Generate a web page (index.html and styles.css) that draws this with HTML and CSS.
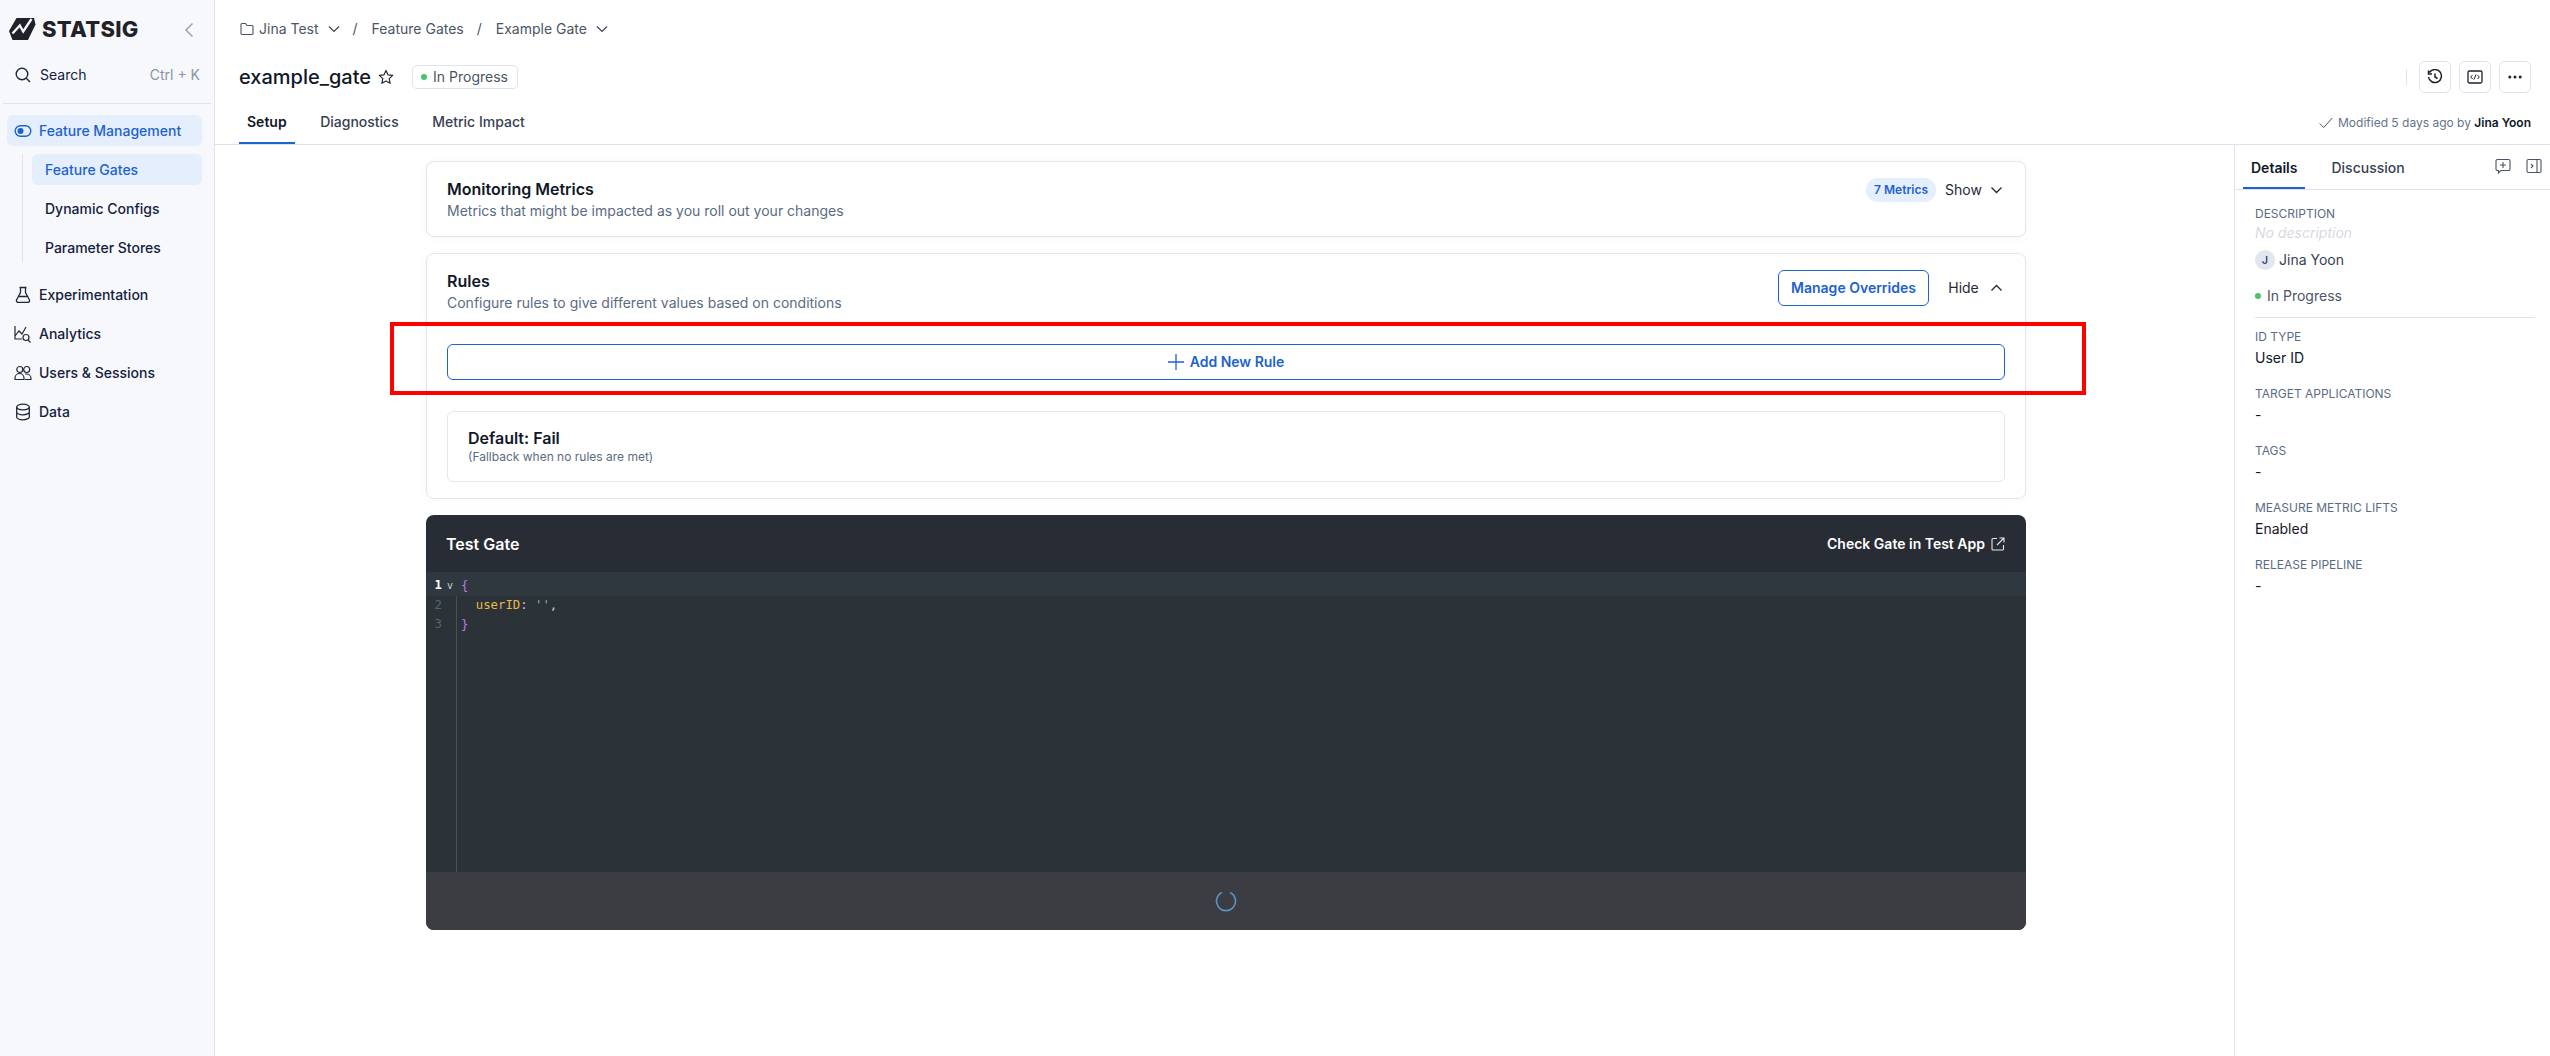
FILE: index.html
```html
<!DOCTYPE html>
<html lang="en">
<head>
<meta charset="utf-8">
<title>example_gate - Statsig</title>
<link rel="stylesheet" href="styles.css">
</head>
<body>
<div class="app">
  <aside class="sidebar">
    <div class="brand">
      <svg class="logo-mark" width="27" height="22" viewBox="0 0 27 22"><path fill="#1f2229" d="M7.500 0H25l1.500 6.500L19 22H3.500L0 13z"/><path d="M3.500 15.500 10.800 7.500l3.400 6L22.500 1" fill="none" stroke="#f7f8fb" stroke-width="2.300"/></svg>
      <span class="brand-name">STATSIG</span>
      <svg class="collapse" width="10" height="16" viewBox="0 0 10 16"><path d="M8.500 1.500 2 8l6.500 6.500" fill="none" stroke="#9aa3b2" stroke-width="1.500"/></svg>
    </div>
    <div class="search">
      <svg class="side-ico" width="18" height="18" viewBox="0 0 18 18"><circle cx="8" cy="8" r="5.800" fill="none" stroke="#1f2937" stroke-width="1.400"/><path d="m12.300 12.300 3.700 3.700" stroke="#1f2937" stroke-width="1.400"/></svg>
      <span class="search-label">Search</span>
      <span class="kbd">Ctrl + K</span>
    </div>
    <div class="side-divider"></div>
    <nav class="nav">
      <a class="nav-row nav-active">
        <svg class="side-ico" width="18" height="18" viewBox="0 0 18 18"><rect x="1.200" y="3.700" width="15.600" height="10.600" rx="5.300" fill="none" stroke="#1c62d1" stroke-width="1.400"/><circle cx="6.500" cy="9" r="3" fill="#1c62d1"/></svg>
        <span>Feature Management</span>
      </a>
      <div class="subnav">
        <a class="sub-row sub-active">Feature Gates</a>
        <a class="sub-row">Dynamic Configs</a>
        <a class="sub-row">Parameter Stores</a>
      </div>
      <a class="nav-row">
        <svg class="side-ico" width="18" height="18" viewBox="0 0 18 18"><path d="M5.500 1.500h7M6.500 1.500v5L2.800 13.500a1.700 1.700 0 0 0 1.500 2.800h9.400a1.700 1.700 0 0 0 1.500-2.800L11.500 6.500v-5M4.800 10.500h8.400" fill="none" stroke="#1f2937" stroke-width="1.300"/></svg>
        <span>Experimentation</span>
      </a>
      <a class="nav-row">
        <svg class="side-ico" width="18" height="18" viewBox="0 0 18 18"><path d="M1 1v13h7M1 11l4-5 3 3 4-7" fill="none" stroke="#1f2937" stroke-width="1.200"/><circle cx="12" cy="12.500" r="3" fill="none" stroke="#1f2937" stroke-width="1.200"/><path d="m14 15 2.500 2.500" stroke="#1f2937" stroke-width="1.200"/></svg>
        <span>Analytics</span>
      </a>
      <a class="nav-row">
        <svg class="side-ico" width="18" height="18" viewBox="0 0 18 18"><circle cx="5.800" cy="5.500" r="3" fill="none" stroke="#1f2937" stroke-width="1.200"/><circle cx="12.700" cy="5.500" r="3" fill="none" stroke="#1f2937" stroke-width="1.200"/><path d="M1 15.500v-1.500a4.500 4.500 0 0 1 9 0v1.500zM11 10h1.500a4.500 4.500 0 0 1 4.500 4.500v1h-6" fill="none" stroke="#1f2937" stroke-width="1.200"/></svg>
        <span>Users &amp; Sessions</span>
      </a>
      <a class="nav-row">
        <svg class="side-ico" width="18" height="18" viewBox="0 0 18 18"><ellipse cx="9" cy="4" rx="6.300" ry="2.800" fill="none" stroke="#1f2937" stroke-width="1.300"/><path d="M2.700 4v10c0 1.500 2.800 2.800 6.300 2.800s6.300-1.300 6.300-2.800V4M2.700 9c0 1.500 2.800 2.800 6.300 2.800S15.300 10.500 15.300 9" fill="none" stroke="#1f2937" stroke-width="1.300"/></svg>
        <span>Data</span>
      </a>
    </nav>
  </aside>

  <div class="main">
    <header class="topbar">
      <div class="crumbs">
        <svg width="14" height="14" viewBox="0 0 14 14"><path d="M1 2.500a1 1 0 0 1 1-1h3.500l1.500 2h5a1 1 0 0 1 1 1v7a1 1 0 0 1-1 1H2a1 1 0 0 1-1-1z" fill="none" stroke="#4b5563" stroke-width="1.100"/></svg>
        <span class="crumb crumb-first">Jina Test</span>
        <svg class="crumb-chev" width="12" height="8" viewBox="0 0 12 8"><path d="m1 1.500 5 5 5-5" fill="none" stroke="#374151" stroke-width="1.200"/></svg>
        <span class="crumb-sep">/</span>
        <span class="crumb">Feature Gates</span>
        <span class="crumb-sep">/</span>
        <span class="crumb">Example Gate</span>
        <svg class="crumb-chev" width="12" height="8" viewBox="0 0 12 8"><path d="m1 1.500 5 5 5-5" fill="none" stroke="#374151" stroke-width="1.200"/></svg>
      </div>
      <div class="title-row">
        <h1 class="title">example_gate</h1>
        <svg class="star" width="16" height="16" viewBox="0 0 16 16"><path d="m8 1.500 2 4.300 4.700.6-3.500 3.200.9 4.700L8 12l-4.100 2.300.9-4.700L1.300 6.400 6 5.800z" fill="none" stroke="#1f2937" stroke-width="1.200" stroke-linejoin="round"/></svg>
        <span class="badge"><i class="dot"></i>In Progress</span>
        <div class="actions">
          <span class="action-sep"></span>
          <button class="icon-btn"><svg width="16" height="16" viewBox="0 0 16 16"><path d="M2.500 3.500a6.500 6.500 0 1 1-1 4.500M1.500 1.500v3.500h3.500M8 4.500V8l2.500 1.500" fill="none" stroke="#1f2229" stroke-width="1.500"/></svg></button>
          <button class="icon-btn"><svg width="16" height="16" viewBox="0 0 16 16"><rect x="1" y="2" width="14" height="12" rx="1.500" fill="none" stroke="#1f2229" stroke-width="1.300"/><path d="M5.500 6 3.700 8l1.800 2M10.500 6l1.800 2-1.800 2M9 5.500 7 10.500" fill="none" stroke="#1f2229" stroke-width="1"/></svg></button>
          <button class="icon-btn"><svg width="16" height="16" viewBox="0 0 16 16"><circle cx="2.800" cy="8" r="1.500" fill="#1f2229"/><circle cx="8" cy="8" r="1.500" fill="#1f2229"/><circle cx="13.200" cy="8" r="1.500" fill="#1f2229"/></svg></button>
        </div>
      </div>
      <div class="tab-row">
        <div class="tabs">
          <a class="tab tab-active">Setup</a>
          <a class="tab">Diagnostics</a>
          <a class="tab">Metric Impact</a>
        </div>
        <div class="modified">
          <svg width="14" height="12" viewBox="0 0 14 12"><path d="m.7 6.500 4 4 8.600-9.500" fill="none" stroke="#4b5563" stroke-width="1"/></svg>
          <span>Modified 5 days ago by <b>Jina Yoon</b></span>
        </div>
      </div>
    </header>

    <div class="workspace">
      <section class="content">
        <div class="card">
          <div class="card-head">
            <div class="card-text">
              <h2>Monitoring Metrics</h2>
              <p>Metrics that might be impacted as you roll out your changes</p>
            </div>
            <div class="card-ctrl">
              <span class="pill">7 Metrics</span>
              <span class="toggle-label">Show</span>
              <svg class="toggle-chev" width="16" height="16" viewBox="0 0 16 16"><path d="m3.500 5.500 5 5 5-5" fill="none" stroke="#1f2937" stroke-width="1.300"/></svg>
            </div>
          </div>
        </div>

        <div class="card rules">
          <div class="card-head">
            <div class="card-text">
              <h2>Rules</h2>
              <p>Configure rules to give different values based on conditions</p>
            </div>
            <div class="card-ctrl">
              <button class="btn-outline manage">Manage Overrides</button>
              <span class="toggle-label">Hide</span>
              <svg class="toggle-chev" width="16" height="16" viewBox="0 0 16 16"><path d="m3.500 10.500 5-5 5 5" fill="none" stroke="#1f2937" stroke-width="1.300"/></svg>
            </div>
          </div>
          <button class="btn-outline add-rule">
            <svg width="16" height="16" viewBox="0 0 16 16"><path d="M8 0v16M0 8h16" stroke="#1c62d1" stroke-width="1.300"/></svg>
            <span>Add New Rule</span>
          </button>
          <div class="default-rule">
            <h3>Default: Fail</h3>
            <p>(Fallback when no rules are met)</p>
          </div>
          <div class="highlight"></div>
        </div>

        <div class="test-gate">
          <div class="test-head">
            <h2>Test Gate</h2>
            <a class="test-link">Check Gate in Test App
              <svg width="14" height="14" viewBox="0 0 14 14"><path d="M6 1.500H2a1 1 0 0 0-1 1v9.500a1 1 0 0 0 1 1h9.500a1 1 0 0 0 1-1V8M6 8l7-7M8.500 1H13v4.500" fill="none" stroke="#e5e7eb" stroke-width="1.100"/></svg>
            </a>
          </div>
          <div class="editor">
            <div class="code-line line-active"><span class="ln ln-active">1</span><span class="fold">v</span><span class="lc"><span class="c-brace">{</span></span></div>
            <div class="code-line"><span class="ln">2</span><span class="fold"></span><span class="lc">  <span class="c-key">userID</span><span class="c-punc">:</span> <span class="c-str">''</span><span class="c-punc">,</span></span></div>
            <div class="code-line"><span class="ln">3</span><span class="fold"></span><span class="lc"><span class="c-brace">}</span></span></div>
          </div>
          <div class="test-foot">
            <svg class="spinner" width="22" height="22" viewBox="0 0 22 22"><path d="M7 2.500a9.500 9.500 0 1 0 8 0" fill="none" stroke="#5b93c7" stroke-width="1.600"/></svg>
          </div>
        </div>
      </section>

      <aside class="panel">
        <div class="panel-tabs">
          <a class="tab tab-active">Details</a>
          <a class="tab">Discussion</a>
          <div class="panel-icons">
            <svg width="16" height="16" viewBox="0 0 16 16"><path d="M1 3a1.500 1.500 0 0 1 1.500-1.500h11A1.500 1.500 0 0 1 15 3v8a1.500 1.500 0 0 1-1.500 1.500H6L3.500 15v-2.500h-1A1.500 1.500 0 0 1 1 11zM8 4v6M5 7h6" fill="none" stroke="#4b5563" stroke-width="1.100"/></svg>
            <svg width="16" height="16" viewBox="0 0 16 16"><rect x="1" y="1.500" width="14" height="13" rx="1.500" fill="none" stroke="#4b5563" stroke-width="1.100"/><path d="M11 1.500v13M5 6l2 2-2 2" fill="none" stroke="#4b5563" stroke-width="1.100"/></svg>
          </div>
        </div>
        <div class="panel-body">
          <div class="label">DESCRIPTION</div>
          <div class="no-desc">No description</div>
          <div class="owner"><span class="avatar">J</span><span>Jina Yoon</span></div>
          <div class="status"><i class="dot"></i>In Progress</div>
          <div class="panel-divider"></div>
          <dl class="facts">
            <dt class="label">ID TYPE</dt><dd>User ID</dd>
            <dt class="label">TARGET APPLICATIONS</dt><dd>-</dd>
            <dt class="label">TAGS</dt><dd>-</dd>
            <dt class="label">MEASURE METRIC LIFTS</dt><dd>Enabled</dd>
            <dt class="label">RELEASE PIPELINE</dt><dd>-</dd>
          </dl>
        </div>
      </aside>
    </div>
  </div>
</div>
</body>
</html>
```
FILE: styles.css
```css
* { box-sizing: border-box; }
html, body { margin: 0; height: 100%; }
body { font-family: Inter, "Noto Sans", sans-serif; font-size: 14px; line-height: 20px; color: #1f2937; background: #fff; overflow: hidden; }
h1, h2, h3, p, dl, dd { margin: 0; }
button { font: inherit; cursor: pointer; background: none; }
.app { display: flex; height: 1056px; }

.sidebar { width: 215px; flex: none; background: #f7f8fb; border-right: 1px solid #dfe3ec; }
.brand { display: flex; align-items: center; height: 57px; padding: 0 20px 0 9px; }
.logo-mark { flex: none; }
.brand-name { font-weight: 800; font-size: 22px; letter-spacing: .3px; color: #1f2229; margin-left: 6px; }
.collapse { margin-left: auto; margin-top: 3px; }
.search { display: flex; align-items: center; height: 36px; padding: 0 14px 0 14px; color: #14213d; }
.side-ico { flex: none; }
.search-label { margin-left: 8px; }
.kbd { margin-left: auto; color: #8a94a6; }
.side-divider { height: 1px; margin: 10px 3px 11px; background: #dfe3ec; }
.nav { padding: 0 12px 0 7px; display: flex; flex-direction: column; gap: 8px; }
.nav-row { display: flex; align-items: center; gap: 7px; height: 31px; padding-left: 7px; border-radius: 6px; font-weight: 500; color: #14213d; }
.nav-active { background: #e4eefc; color: #1c62d1; }
.subnav { display: flex; flex-direction: column; gap: 8px; margin: 0 0 8px 15px; padding-left: 9px; border-left: 1px solid #dfe3ec; }
.sub-row { height: 31px; display: flex; align-items: center; padding-left: 13px; border-radius: 6px; font-weight: 500; color: #14213d; }
.sub-active { background: #e4eefc; color: #1c62d1; }

.main { flex: 1; min-width: 0; display: flex; flex-direction: column; }
.topbar { height: 145px; flex: none; border-bottom: 1px solid #dfe3ec; padding: 0 19px 0 24px; position: relative; }
.crumbs { height: 58px; display: flex; align-items: center; color: #4b5563; font-size: 14px; padding-left: 1px; }
.crumb-first { margin-left: 5px; }
.crumb-chev { margin-left: 9px; }
.crumb-sep { margin: 0 14px 0 13px; color: #4b5563; }
.title-row { height: 38px; display: flex; align-items: center; }
.title { font-size: 20px; font-weight: 500; line-height: 28px; color: #111827; }
.star { margin-left: 7px; }
.badge { margin-left: 18px; height: 24px; width: 106px; border: 1px solid #dfe3ec; border-radius: 5px; display: flex; align-items: center; padding-left: 8px; color: #4b5563; }
.dot { display: inline-block; width: 6px; height: 6px; border-radius: 50%; background: #4cc06a; margin-right: 6px; }
.actions { margin-left: auto; display: flex; align-items: center; gap: 8px; }
.action-sep { width: 1px; height: 16px; background: #dfe3ec; margin-right: 4px; }
.icon-btn { width: 32px; height: 32px; border: 1px solid #dfe3ec; border-radius: 6px; display: flex; align-items: center; justify-content: center; padding: 0; }
.tab-row { height: 48px; display: flex; justify-content: space-between; }
.tabs { display: flex; gap: 17.500px; }
.tab { display: block; padding: 16px 8px 0; font-weight: 500; color: #374151; border-bottom: 2px solid transparent; }
.tab-active { color: #111827; font-weight: 600; border-bottom-color: #1c62d1; }
.modified { display: flex; align-items: center; gap: 5px; font-size: 12px; color: #64748b; height: 48px; padding-top: 6px; }
.modified b { color: #111827; font-weight: 600; }

.workspace { flex: 1; display: flex; min-height: 0; }
.content { flex: 1; min-width: 0; padding: 16px 208px 0 211px; display: flex; flex-direction: column; gap: 16px; }
.card { border: 1px solid #e3e6ed; border-radius: 8px; padding: 17px 20px 15px; background: #fff; box-shadow: 0 1px 8px rgba(20, 30, 60, .04); }
.rules { position: relative; padding-bottom: 16px; padding-top: 17px; }
.card-head { display: flex; justify-content: space-between; align-items: flex-start; }
.card-text h2 { font-size: 16px; font-weight: 600; color: #111827; line-height: 20px; }
.card-text p { margin-top: 2px; color: #5b6b82; }
.card-ctrl { display: flex; align-items: center; margin-top: -1px; }
.pill { height: 24px; border-radius: 12px; background: #e4eefc; color: #1c62d1; font-size: 12px; font-weight: 600; padding: 0 8px; display: flex; align-items: center; margin-right: 3px; }
.toggle-label { width: 49px; text-align: center; color: #1f2937; }
.toggle-chev { flex: none; margin-right: 1px; }
.btn-outline { border: 1px solid #1c62d1; border-radius: 6px; color: #1c62d1; font-weight: 600; font-size: 14px; height: 36px; padding: 0; display: flex; align-items: center; justify-content: center; gap: 6px; }
.manage { width: 151px; margin-right: 10px; }
.add-rule { width: 100%; margin-top: 31px; }
.default-rule { margin-top: 31px; height: 71px; border: 1px solid #e3e6ed; border-radius: 6px; padding: 16px 20px 0; }
.default-rule h3 { font-size: 16px; font-weight: 600; color: #111827; line-height: 20px; }
.default-rule p { font-size: 12px; line-height: 16px; color: #5b6b82; margin-top: 1px; }
.highlight { position: absolute; left: -37px; right: -61px; top: 68px; height: 73px; border: 4px solid #ff0000; pointer-events: none; }

.test-gate { height: 415px; border-radius: 8px; overflow: hidden; background: #282c34; display: flex; flex-direction: column; }
.test-head { height: 57px; flex: none; display: flex; justify-content: space-between; align-items: center; padding: 0 21px 0 20px; color: #fff; }
.test-head h2 { font-size: 16px; font-weight: 600; }
.test-link { font-weight: 600; font-size: 14px; display: flex; align-items: center; gap: 6px; }
.editor { height: 300px; flex: none; background: #2b3339; font-family: "DejaVu Sans Mono", monospace; font-size: 12.300px; position: relative; padding-top: 4px; }
.editor::before { content: ""; position: absolute; left: 30px; top: 0; bottom: 0; width: 1px; background: #4a5058; }
.code-line { display: flex; height: 19.600px; line-height: 19.600px; position: relative; white-space: pre; }
.line-active { background: #2f383f; box-shadow: 0 -4px 0 #2f383f; }
.ln { width: 20px; text-align: right; color: #5a6470; padding-right: 4px; }
.ln-active { color: #fff; font-weight: 700; }
.fold { width: 15px; color: #c7ccd1; font-size: 10px; text-align: left; padding-left: 1px; }
.lc { color: #abb2bf; }
.c-brace { color: #b77fe0; }
.c-key { color: #e8b84a; }
.c-punc { color: #c7ccd1; }
.c-str { color: #7fc26b; }
.test-foot { flex: 1; background: #3c3d43; display: flex; align-items: center; justify-content: center; }

.panel { width: 316px; flex: none; border-left: 1px solid #dfe3ec; }
.panel-tabs { height: 45px; border-bottom: 1px solid #dfe3ec; display: flex; gap: 18px; padding-left: 8px; padding-right: 8px; }
.panel-tabs .tab { padding-top: 13px; height: 44px; }
.panel-icons { margin-left: auto; display: flex; align-items: center; gap: 15px; height: 28px; margin-top: 7px; }
.panel-body { padding: 16px 15px 0 20px; }
.label { font-size: 12px; line-height: 16px; color: #5b6b82; }
.no-desc { margin-top: 1px; font-style: italic; color: #d6d9e0; }
.owner { display: flex; align-items: center; gap: 4px; margin-top: 7px; color: #374151; }
.avatar { width: 20px; height: 20px; border-radius: 50%; background: #e1e6ef; color: #1f3a68; font-size: 11px; font-weight: 500; display: flex; align-items: center; justify-content: center; }
.status { display: flex; align-items: center; margin-top: 16px; color: #4b5563; }
.panel-divider { height: 1px; background: #dfe3ec; margin-top: 11px; }
.facts { margin-top: 11px; }
.facts dd { margin-top: 3px; margin-bottom: 18px; color: #111827; }
```
